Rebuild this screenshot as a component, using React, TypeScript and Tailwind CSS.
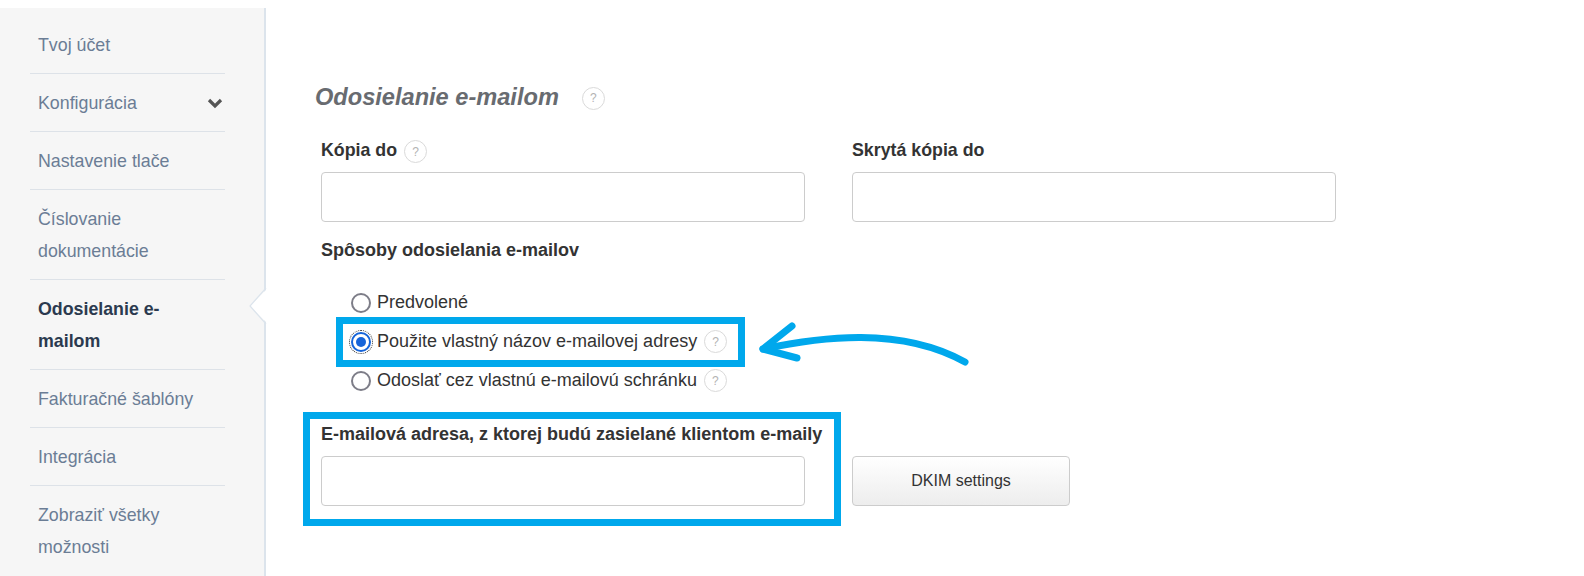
// email sending settings page

const sideItems = [
  { lines: ["Tvoj účet"] },
  { lines: ["Konfigurácia"], chevron: true },
  { lines: ["Nastavenie tlače"] },
  { lines: ["Číslovanie", "dokumentácie"] },
  { lines: ["Odosielanie e-", "mailom"], active: true },
  { lines: ["Fakturačné šablóny"] },
  { lines: ["Integrácia"] },
  { lines: ["Zobraziť všetky", "možnosti"] },
];

function Help({ className = "" }: { className?: string }) {
  return (
    <span
      className={`inline-flex h-[23px] w-[23px] shrink-0 items-center justify-center rounded-full border border-[#dadada] bg-white text-[12px] font-normal not-italic text-[#b3b3b3] ${className}`}
    >
      ?
    </span>
  );
}

function Radio({ checked }: { checked?: boolean }) {
  if (checked) {
    return (
      <span className="flex h-[20px] w-[20px] shrink-0 items-center justify-center rounded-full border-2 border-[#1664d9] outline-1 outline-dotted outline-[#333] outline-offset-1">
        <span className="h-[10px] w-[10px] rounded-full bg-[#1664d9]" />
      </span>
    );
  }
  return <span className="h-[20px] w-[20px] shrink-0 rounded-full border-2 border-[#7d7d88] bg-white" />;
}

export default function App() {
  return (
    <div className="relative flex h-[576px] w-[1584px] overflow-hidden bg-white font-['Liberation_Sans',Arial,sans-serif]">
      {/* sidebar */}
      <aside className="mt-2 h-[568px] w-[266px] shrink-0 border-r-2 border-[#dce4ec] bg-[#f6f6f6] pt-2 pl-[30px]">
        <ul className="w-[195px]">
          {sideItems.map((item, i) => (
            <li
              key={i}
              className={`relative flex items-center justify-between py-[12.5px] pl-2 text-[17.8px] leading-[32px] ${
                i < sideItems.length - 1 ? "border-b border-[#dde2e8]" : ""
              } ${item.active ? "font-bold text-[#2b3a4f]" : "text-[#6b7d95]"}`}
            >
              <span>
                {item.lines.map((l) => (
                  <span key={l} className="block">
                    {l}
                  </span>
                ))}
              </span>
              {item.chevron && (
                <svg width="16" height="11" viewBox="0 0 16 11" className="mr-[2px] mt-[2px]">
                  <polyline points="2,2 8,8 14,2" fill="none" stroke="#555" strokeWidth="3.2" />
                </svg>
              )}
              {item.active && (
                <svg width="19" height="36" viewBox="0 0 19 36" className="absolute left-[219px] top-[8px]">
                  <polygon points="19,0 1,18 19,36" fill="#fff" />
                  <polyline points="17,0 1,18 17,36" fill="none" stroke="#dce4ec" strokeWidth="1.2" />
                </svg>
              )}
            </li>
          ))}
        </ul>
      </aside>

      {/* main */}
      <main className="flex-1 pl-[55px] pt-[83px] text-[#333]">
        <div className="-ml-[6px] flex h-[30px] items-center">
          <h1 className="text-[23.6px] font-bold italic text-[#686b70]">Odosielanie e-mailom</h1>
          <Help className="ml-[23px]" />
        </div>

        <div className="mt-[25px] flex gap-[47px]">
          <div className="w-[484px]">
            <div className="flex h-6 items-center text-[17.8px] font-bold">
              Kópia do
              <Help className="ml-[7px] mt-[3px]" />
            </div>
            <input className="mt-[10px] block h-[50px] w-full rounded-[4px] border border-[#cccccc] bg-white" />
          </div>
          <div className="w-[484px]">
            <div className="flex h-6 items-center text-[17.8px] font-bold">Skrytá kópia do</div>
            <input className="mt-[10px] block h-[50px] w-full rounded-[4px] border border-[#cccccc] bg-white" />
          </div>
        </div>

        <div className="mt-4 h-6 text-[18px] font-bold leading-6">Spôsoby odosielania e-mailov</div>

        <div className="mt-[21px] pl-[30px] text-[18px]">
          <div className="flex h-[39px] items-center">
            <Radio />
            <span className="ml-[6px]">Predvolené</span>
          </div>
          <div className="relative flex h-[39px] w-fit items-center">
            <Radio checked />
            <span className="ml-[6px]">Použite vlastný názov e-mailovej adresy</span>
            <Help className="ml-[7px]" />
            <div className="absolute -top-[5px] -right-[18px] -bottom-[6px] -left-[15px] border-[7px] border-[#00a8ec]" />
          </div>
          <div className="flex h-[39px] items-center">
            <Radio />
            <span className="ml-[6px]">Odoslať cez vlastnú e-mailovú schránku</span>
            <Help className="ml-[7px]" />
          </div>
        </div>

        <div className="mt-[22px] flex items-end gap-[47px]">
          <div className="relative w-[484px]">
            <div className="h-6 whitespace-nowrap text-[18px] font-bold leading-6">
              E-mailová adresa, z ktorej budú zasielané klientom e-maily
            </div>
            <input className="mt-[10px] block h-[50px] w-full rounded-[4px] border border-[#cccccc] bg-white" />
            <div className="absolute -top-[10px] -right-[36px] -bottom-[20px] -left-[18px] border-[7px] border-[#00a8ec]" />
          </div>
          <button className="h-[50px] w-[218px] rounded-[4px] border border-[#cccccc] bg-gradient-to-b from-white to-[#ededed] text-[16px] text-[#333]">
            DKIM settings
          </button>
        </div>
      </main>

      {/* annotation arrow */}
      <svg
        className="pointer-events-none absolute inset-0"
        width="1584"
        height="576"
        viewBox="0 0 1584 576"
      >
        <g fill="none" stroke="#00a8ec" strokeWidth="7" strokeLinecap="round" strokeLinejoin="round">
          <path d="M763 349 C 820 337 900 326 965 362" />
          <path d="M792 326 L763 349 L797 358" />
        </g>
      </svg>
    </div>
  );
}
